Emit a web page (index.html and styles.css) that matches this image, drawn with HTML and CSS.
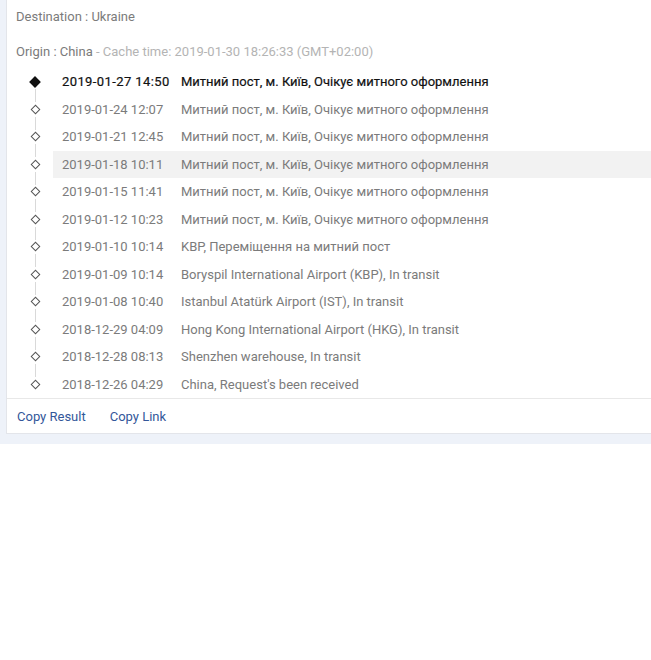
FILE: index.html
```html
<!DOCTYPE html>
<html>
<head>
<meta charset="utf-8">
<link rel="stylesheet" href="styles.css">
</head>
<body>
<div class="page">
  <div class="card">
    <div class="head">
      <div class="line">Destination : Ukraine</div>
      <div class="line origin">Origin : China <span class="cache">- Cache time: 2019-01-30 18:26:33 (GMT+02:00)</span></div>
    </div>
    <ul class="timeline">
      <li class="ev current"><span class="mk"><i class="dot"></i></span><div class="txt"><span class="dt">2019-01-27 14:50</span><span class="ds">Митний пост, м. Київ, Очікує митного оформлення</span></div></li>
      <li class="ev"><span class="mk"><i class="dot"></i></span><div class="txt"><span class="dt">2019-01-24 12:07</span><span class="ds">Митний пост, м. Київ, Очікує митного оформлення</span></div></li>
      <li class="ev"><span class="mk"><i class="dot"></i></span><div class="txt"><span class="dt">2019-01-21 12:45</span><span class="ds">Митний пост, м. Київ, Очікує митного оформлення</span></div></li>
      <li class="ev hover"><span class="mk"><i class="dot"></i></span><div class="txt"><span class="dt">2019-01-18 10:11</span><span class="ds">Митний пост, м. Київ, Очікує митного оформлення</span></div></li>
      <li class="ev"><span class="mk"><i class="dot"></i></span><div class="txt"><span class="dt">2019-01-15 11:41</span><span class="ds">Митний пост, м. Київ, Очікує митного оформлення</span></div></li>
      <li class="ev"><span class="mk"><i class="dot"></i></span><div class="txt"><span class="dt">2019-01-12 10:23</span><span class="ds">Митний пост, м. Київ, Очікує митного оформлення</span></div></li>
      <li class="ev"><span class="mk"><i class="dot"></i></span><div class="txt"><span class="dt">2019-01-10 10:14</span><span class="ds">KBP, Переміщення на митний пост</span></div></li>
      <li class="ev"><span class="mk"><i class="dot"></i></span><div class="txt"><span class="dt">2019-01-09 10:14</span><span class="ds">Boryspil International Airport (KBP), In transit</span></div></li>
      <li class="ev"><span class="mk"><i class="dot"></i></span><div class="txt"><span class="dt">2019-01-08 10:40</span><span class="ds">Istanbul Atatürk Airport (IST), In transit</span></div></li>
      <li class="ev"><span class="mk"><i class="dot"></i></span><div class="txt"><span class="dt">2018-12-29 04:09</span><span class="ds">Hong Kong International Airport (HKG), In transit</span></div></li>
      <li class="ev"><span class="mk"><i class="dot"></i></span><div class="txt"><span class="dt">2018-12-28 08:13</span><span class="ds">Shenzhen warehouse, In transit</span></div></li>
      <li class="ev last"><span class="mk"><i class="dot"></i></span><div class="txt"><span class="dt">2018-12-26 04:29</span><span class="ds">China, Request's been received</span></div></li>
    </ul>
    <div class="foot">
      <a class="act">Copy Result</a>
      <a class="act">Copy Link</a>
    </div>
  </div>
</div>
</body>
</html>
```

FILE: styles.css
```css
html, body {
  margin: 0;
  padding: 0;
  background: #fff;
}
body {
  font-family: Roboto, "Liberation Sans", Arial, sans-serif;
  font-size: 13px;
  color: #7b7b7b;
}
.page {
  background: #eef2f9;
  padding: 0 0 10px 6px;
  overflow: hidden;
}
.card {
  background: #fff;
  border: 1px solid #e3e5ea;
  border-top: none;
  margin-right: -40px;
}
.head {
  padding: 7px 9px 0;
}
.line {
  line-height: 20px;
  height: 20px;
}
.origin {
  margin-top: 15px;
}
.cache {
  color: #b4b4b4;
}
.timeline {
  list-style: none;
  margin: 6px 0 0;
  padding: 0;
}
.ev {
  display: flex;
  height: 27.5px;
}
.mk {
  position: relative;
  width: 46px;
  flex: none;
  display: flex;
  align-items: center;
}
.dot {
  display: block;
  box-sizing: border-box;
  width: 7px;
  height: 7px;
  margin-left: 24.5px;
  border: 1px solid #555;
  background: #fff;
  transform: rotate(45deg);
}
.current .dot {
  background: #111;
  border-color: #111;
  width: 8px;
  height: 8px;
  margin-left: 24px;
}
.mk::after {
  content: "";
  position: absolute;
  left: 27.5px;
  width: 1px;
  top: 21px;
  height: 13px;
  background: #d9d9d9;
}
.last .mk::after {
  display: none;
}
.txt {
  flex: 1;
  display: flex;
  align-items: center;
  padding-left: 9px;
  white-space: nowrap;
}
.hover .txt {
  background: #f2f2f2;
}
.dt {
  width: 119px;
  flex: none;
}
.current .txt {
  color: #111;
  -webkit-text-stroke: 0.2px #111;
}
.current .dt {
  letter-spacing: 0.4px;
}
.foot {
  border-top: 1px solid #e8e8e8;
  height: 34px;
  display: flex;
  align-items: center;
  padding-left: 10px;
  gap: 24px;
}
.act {
  color: #33579a;
  cursor: pointer;
}
```
